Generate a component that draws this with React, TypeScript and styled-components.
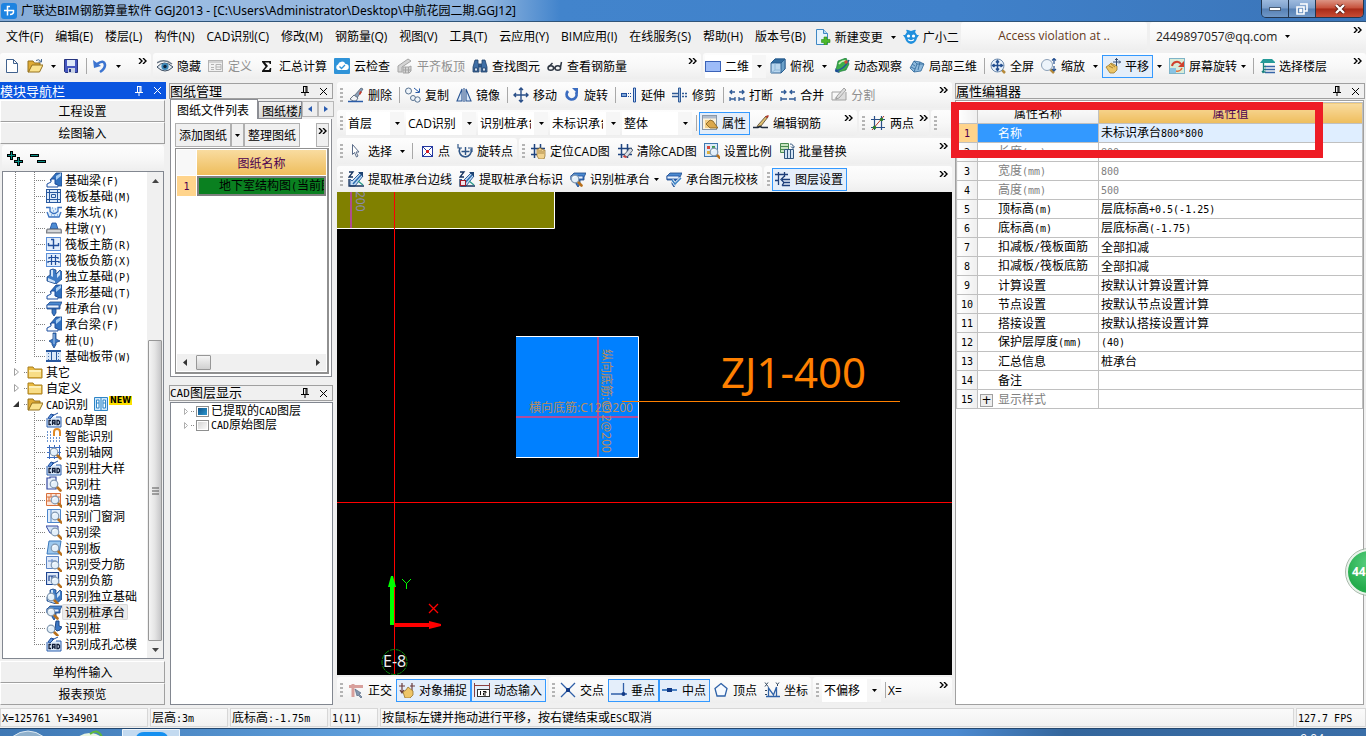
import React from 'react';
import styled, { createGlobalStyle, css } from 'styled-components';

const ui = `'Open Sans', 'Noto Sans CJK SC', sans-serif`;

const GlobalStyle = createGlobalStyle`
  * { box-sizing: border-box; }
  html, body { margin: 0; height: 100%; overflow: hidden; }
  body { background: #f0f0f0; color: #000; font: 12px/16px ${ui}; }
  button, select, input { font: inherit; color: inherit; margin: 0; }
  button { padding: 0; border: 0; background: none; white-space: nowrap; }
`;

/* ---------- icons ---------- */

const Svg = styled.svg`
  flex: none;
  display: block;
`;

const navy = '#1f4e9c';

const Lens = ({ x = 9, y = 8 }: { x?: number; y?: number }) => (
  <g>
    <path d={`M${x + 3} ${y + 3}l3.5 3.5`} stroke="#b8701c" strokeWidth="2.6" strokeLinecap="round" />
    <circle cx={x} cy={y} r="3.8" fill="#e4f0fa" stroke="#8298b0" strokeWidth="1.2" />
    <path d={`M${x - 2} ${y - 1}q1-1.6 2.6-1.2`} stroke="#fff" fill="none" />
  </g>
);

const CadTag = () => (
  <g>
    <path d="M1 6V15H15V5H10" fill="#dbe9fa" stroke="#2b5fae" />
    <path d="M2 6l3-4 3 1-4 4z M6 4l6-3" fill="#5f95de" stroke="#1f4e9c" />
    <path d="M5 8.5H3v4h2M6.5 13V8.500h2.500V13M6.500 11H9M11 8.500h1.500l1 1v2l-1 1H11z" fill="none" stroke="#101c38" strokeWidth="1.3" />
  </g>
);

const BeamShape = () => (
  <g>
    <path d="M4 8L10 1l6 0v13h-3z" fill="#2f6fbe" stroke="#1a4688" strokeWidth=".8" />
    <path d="M10 4l5-3v3l-5 4z" fill="#a8cdf2" />
    <path d="M5 7h4v5l3 1v2H1v-3l4-2z" fill="#f6faff" stroke="#1d4f9f" />
  </g>
);

const CapShape = () => (
  <g>
    <path d="M1 5l3-3h12l-2 4v3H1z" fill="#4c8ad0" stroke="#1a4688" strokeWidth=".8" />
    <rect x="1" y="5" width="12" height="3" fill="#e8f2fd" stroke="#1d4f9f" strokeWidth=".8" />
    <path d="M6 9h4v4l-2 3-2-3z" fill="#3a78c4" stroke="#1a4688" strokeWidth=".8" />
  </g>
);

const PadShape = () => (
  <g>
    <path d="M1 9l3-2V2l3-1 3 1v4l4-4 2 2v7l-6 5-9-3z" fill="#3f7cc6" stroke="#1a4688" strokeWidth=".8" />
    <path d="M5 2v6l2 1V2M11 6l3-3v4l-3 3zM2 10l7 3v2l-7-2z" fill="#cfe3f8" />
  </g>
);

const FolderShape = () => (
  <g>
    <path d="M1 3h5l1.500 2H15v9H1z" fill="#e9b93f" stroke="#a87f1e" />
    <path d="M2 6h12v7H2z" fill="#f8dd86" />
    <path d="M2 6h12v2H2z" fill="#fdf0b8" />
  </g>
);

const FolderOpen = () => (
  <g>
    <path d="M1 3h5l1.500 2H13v3H5l-3 6H1z" fill="#e0ac36" stroke="#94701c" />
    <path d="M5 7h11l-3.500 7H1.500z" fill="#fbe38e" stroke="#94701c" />
  </g>
);

const Extract = ({ dot }: { dot?: boolean }) => (
  <g>
    <path d="M2 8v7h5L15 5l-3-3L4 10z" fill="#c4dcf4" stroke="#2c5f9e" />
    <path d="M1 1h4L1 6h4M1 8v7h15" fill="none" stroke="#16335f" strokeWidth="1.300" />
    <path d="M5 13L13 4" stroke="#2c6cb0" strokeWidth="1.500" />
    <path d="M10 1h5v5z" fill="#1d4373" />
    <path d="M10 10l5 4" stroke="#2c9a8a" strokeWidth="1.400" />
    {dot && <rect x="1.500" y="9.500" width="5" height="5" fill="#f2e4ea" stroke="#9c1c2c" />}
  </g>
);

const SquareRebar = ({ neg }: { neg?: boolean }) => (
  <g fill="none" stroke={navy}>
    <rect x=".5" y="1.500" width="14" height="13" fill="#e2eefc" stroke="#5c8fd8" />
    {neg ? (
      <path d="M5.500 3v10M9.500 3v10M3 5.500h9M2 9.500h11M3 5v2M12 5v2M2 9v2M13 9v2" strokeWidth="1.200" />
    ) : (
      <path d="M7.500 3v10M5 3.500h3M2 9.500h11M2.500 7v3M12.500 7v3" strokeWidth="1.400" />
    )}
  </g>
);

const GridShape = () => <path d="M4.500 1v14M10.500 1v14M1 5.500h14M1 11.500h14" stroke="#1f4480" strokeWidth="1.500" fill="none" />;

const Cube = () => (
  <g stroke="#245a8c" strokeWidth=".9">
    <path d="M1 5l4-4h10v10l-4 4H1z" fill="#b9d6ee" />
    <path d="M1 5l4-4h10l-4 4z" fill="#326c9f" />
    <path d="M11 5l4-4v10l-4 4z" fill="#6ba0c8" />
    <path d="M5 5v7h6M5 12l-4 3" fill="none" stroke="#8ab4d4" />
  </g>
);

const icons: Record<string, React.ReactNode> = {
  page: <path d="M2.500 1.500h7l4 4v9h-11zM9.500 1.500v4h4" fill="#fff" stroke="#41628e" />,
  openFile: (
    <g>
      <FolderOpen />
      <path d="M9 2.500q3-2 5 1M14.500 1v3h-3" fill="none" stroke="#4a6c94" />
    </g>
  ),
  save: (
    <g>
      <path d="M1.500 1.500h13v13h-12l-1-1z" fill="#4557c0" stroke="#26347e" />
      <path d="M4 2h8v6H4z" fill="#dfe9f8" />
      <path d="M5 10h7v5H5z" fill="#c9d2e4" />
      <path d="M6 11h2v3H6z" fill="#26347e" />
    </g>
  ),
  undo: (
    <g>
      <path d="M5 6q7-5 8 1 0 4-5 7" fill="none" stroke="#3c74d0" strokeWidth="2.600" />
      <path d="M1 2l1 8 7-2z" fill="#3c74d0" />
    </g>
  ),
  eye: (
    <g>
      <path d="M0 5q7-5 15 1" stroke="#6a7684" strokeWidth="1.500" fill="none" />
      <path d="M0 9q7-8 16 0-8 8-16 0z" fill="#dfe9f1" stroke="#3b4c60" />
      <circle cx="8" cy="8.500" r="3.600" fill="#3a87b8" />
      <circle cx="8" cy="8.500" r="1.700" fill="#10253c" />
    </g>
  ),
  define: (
    <g fill="none" stroke="#b3b3b3">
      <rect x=".5" y="2.500" width="14" height="11" fill="#f1f1f1" />
      <path d="M1 4h13M3 6.500h3M3 9.500h3M3 11.500h3M8 6.500h5v5H8zM8 9h5" />
    </g>
  ),
  sigma: <path d="M3 3h9v3h-1.200l-.8-1.500H6L9 8l-3.500 4H10l1-2h1.200L12 14H3v-1.200L6.500 8.500 3 4z" fill="#111" />,
  cloud: (
    <g>
      <rect width="16" height="16" rx="1" fill="#2f93d8" />
      <path d="M4 12a3 3 0 0 1 0-5.500 4 4 0 0 1 7.500-.5A3 3 0 0 1 12 12z" fill="#fff" />
      <path d="M5.500 8.500l2 2 3.500-3.500" stroke="#2f93d8" strokeWidth="1.300" fill="none" />
    </g>
  ),
  flush: (
    <g stroke="#a4a4a4" fill="#d4d4d4">
      <path d="M1 8L11 1l3 2-9 6v5H1z" />
      <path d="M6 9h6l2-1v5l-2 2H6z" />
      <path d="M8.500 9v6M11.500 9v6M6 12h8" fill="none" />
    </g>
  ),
  binoculars: (
    <g fill="#3f6fa6" stroke="#1f3f68" strokeWidth=".8">
      <path d="M3 2h3v3l1 2v7H1V9zM10 2h3l2 7v5H9V7l1-2z" />
      <path d="M7 6h2v3H7z" />
      <path d="M2.500 10h3v3h-3zM10.500 10h3v3h-3z" fill="#cfe0f3" />
    </g>
  ),
  glasses: (
    <g fill="none" stroke="#2d3642" strokeWidth="1.500">
      <ellipse cx="3.800" cy="10" rx="2.800" ry="2.300" />
      <ellipse cx="10.800" cy="10" rx="2.800" ry="2.300" />
      <path d="M6.500 10h1.500M1.500 9l4-4M13.500 9l1-5" />
    </g>
  ),
  flat2d: <rect x=".5" y="3.500" width="15" height="10" fill="#9dbcf8" stroke="#3a62b8" />,
  cube: <Cube />,
  orbit: (
    <g>
      <path d="M2 12L4 3l8-3 3 6-3 6-8 2z" fill="#3fae49" stroke="#157a3a" strokeWidth=".7" />
      <path d="M1 13Q10 12 15 2" fill="none" stroke="#245a9a" strokeWidth="1.600" />
      <path d="M5 6q3-4 7-3" fill="none" stroke="#c8f2b8" strokeWidth="1.500" />
      <path d="M1 10l1 4 4 1z" fill="#1c4c92" />
      <circle cx="12" cy="4" r="1.700" fill="#d84c34" />
    </g>
  ),
  part3d: (
    <g fill="#8db9dc" stroke="#2d6698" strokeWidth=".8">
      <path d="M5 3l6 1 4 2-3 7-7 1-4-4z" />
      <path d="M5 3l3 3 7 0M8 6l-3 8M3 6l3 2M11 4l-2 8M2 9l4 2" fill="none" />
    </g>
  ),
  full: (
    <g>
      <path d="M11 11l4 4" stroke="#b58a3a" strokeWidth="2.500" />
      <circle cx="7.500" cy="7.500" r="6.500" fill="#e9f2fb" stroke="#6f8cae" />
      <path d="M7.500 3v9M3 7.500h9M6 4.500l1.500-2 1.500 2M6 10.500l1.500 2 1.500-2M4.500 6l-2 1.500 2 1.500M10.500 6l2 1.500-2 1.500" stroke="#244f90" fill="none" strokeWidth="1.500" />
    </g>
  ),
  zoom: (
    <g>
      <path d="M9 11l4 4" stroke="#b58a3a" strokeWidth="2.500" />
      <circle cx="6" cy="7" r="5.500" fill="#edf4fb" stroke="#8ba0b8" />
      <path d="M13 0v6M11 2.500L13 .5l2 2M13 8v5M11 11l2 2 2-2" stroke="#244f90" fill="none" strokeWidth="1.200" />
    </g>
  ),
  pan: (
    <g>
      <path d="M1 9l3-2 2-2 6 3v4l-3 3H5z" fill="#ecc567" stroke="#9c7a2c" strokeWidth=".8" />
      <path d="M4 8l4 2M6 6l4 3" stroke="#a9822e" />
      <path d="M11.500 0v8M8 4h7.500M10 2l1.500-1.500L13 2M14 2.500L15.500 4 14 5.500" stroke="#324b70" fill="none" />
    </g>
  ),
  screenRotate: (
    <g>
      <rect x=".5" y=".5" width="15" height="15" fill="#d8ecd8" stroke="#7fb4c8" />
      <path d="M1 10h6v5H1z" fill="#88c3e4" />
      <path d="M3 8a5 5 0 0 1 9-2" stroke="#d0402c" strokeWidth="2" fill="none" />
      <path d="M15 3v6H9z" fill="#d0402c" />
      <path d="M13 10a5 5 0 0 1-6 3" stroke="#e0703c" strokeWidth="1.500" fill="none" />
    </g>
  ),
  floors: (
    <g>
      <path d="M4 1h9l3 3v1H1z" fill="#259a98" />
      <path d="M6 8.500h10M6 11.500h10M6 14.500h10" stroke="#3565a8" strokeWidth="1.500" />
      <path d="M4.500 5v9h2M3 13l1.500 2M4 8.500h3M4 11.500h3" stroke="#19807e" fill="none" strokeWidth="1.300" />
    </g>
  ),
  newChange: (
    <g>
      <path d="M1.500.5h7l4 4v11h-11z" fill="#e6f3fd" stroke="#3f88c4" />
      <path d="M8.500.5v4h4" fill="#b7d9f2" stroke="#3f88c4" />
      <path d="M9 8h3v2.500h3v3h-3V16H9v-2.500H6.500v-3H9z" fill="#4cb82c" stroke="#2c8a18" strokeWidth=".6" />
    </g>
  ),
  mascot: (
    <g>
      <path d="M4 3Q2 0 5 1l3 1 3-1q3-1 1 2l2 3h2l-2 3q-1 5-6 6-5-1-6-6L0 6h2z" fill="#1f8fdd" />
      <circle cx="5.500" cy="7" r="1.600" fill="#fff" />
      <circle cx="10.500" cy="7" r="1.600" fill="#fff" />
      <path d="M5 10.500q3 2.500 6 0" stroke="#fff" fill="none" strokeWidth="1.200" />
    </g>
  ),
  brush: (
    <g>
      <path d="M6 9l7-8 2 1-6 9z" fill="#8aa0b8" stroke="#46566a" strokeWidth=".7" />
      <path d="M2 12l4-4 4 3-2 3H5z" fill="#f1f3f6" stroke="#46566a" strokeWidth=".8" />
      <path d="M12 4l2 1-2 3-1-1z" fill="#c43a2c" />
      <path d="M0 14.500h15" stroke="#2a5ca8" strokeWidth="1.500" />
    </g>
  ),
  copy: (
    <g fill="#eef4fa" stroke="#56708e">
      <circle cx="3.500" cy="4" r="3" />
      <circle cx="8" cy="11" r="2.500" />
      <circle cx="12.500" cy="12.500" r="2.700" />
      <path d="M9 1l5 4M14.500 1.500v4h-4" fill="none" stroke="#2a5ca8" />
    </g>
  ),
  mirror: <path d="M6 2v12H1zM10 2v12h5zM8 1v14" fill="#dbe9f8" stroke="#2a5592" strokeWidth="1.100" />,
  move: <path d="M8 1v14M1 8h14M6 3l2-2 2 2M6 13l2 2 2-2M3 6L1 8l2 2M13 6l2 2-2 2" fill="none" stroke="#2a4f88" strokeWidth="1.400" />,
  rotate: (
    <g>
      <path d="M4 4a5 5 0 1 0 8 1" fill="none" stroke="#3a6cc0" strokeWidth="2.800" />
      <path d="M8 1h6v6z" fill="#3a6cc0" />
    </g>
  ),
  extend: (
    <g stroke={navy} fill="none">
      <rect x=".5" y="6.500" width="5" height="3" fill="#7fa6d8" />
      <path d="M7 6.500h4M7 9.500h4" strokeDasharray="1 1" />
      <path d="M12.500 1v14h2V1z" fill="#c4d8f0" />
    </g>
  ),
  trim: (
    <g stroke="#2f5a96" fill="none">
      <path d="M0 6.500h6M0 9.500h6" strokeWidth="1.300" />
      <path d="M6.500 1v14h2V1z" fill="#9fbce0" />
      <path d="M10 6.500h6M10 9.500h6" strokeDasharray="2 1" strokeWidth="1.300" />
    </g>
  ),
  breakLine: <path d="M1 12h5M10 12h5M1 10v4M6 10v4M10 10v4M15 10v4M1 5h5M3 3L1 5l2 2M10 5h5M13 3l2 2-2 2" fill="none" stroke="#2f5a96" strokeWidth="1.300" />,
  merge: <path d="M1 12h6M9 12h6M1 10v4M15 10v4M1 5h5M4 3l2 2-2 2M15 5h-5M12 3l-2 2 2 2" fill="none" stroke="#2f5a96" strokeWidth="1.300" />,
  split: <path d="M1 5h9M1 13h14V5M1 5v8M5 13v-3M13 1L6 9l-1 3 3-1 7-8z" fill="#ddd" stroke="#a2a2a2" />,
  property: (
    <g>
      <rect x=".5" y=".5" width="14" height="14" fill="#fbf2dc" stroke="#8a98a8" />
      <path d="M1 1h13v2.500H1z" fill="#b0bccc" />
      <path d="M3 5h4v8H3z" fill="#f3cf86" />
      <path d="M4 9l4-4 3 1 2 3 3 4H8z" fill="#dba84c" stroke="#7c5a20" strokeWidth=".8" />
    </g>
  ),
  pencil: (
    <g>
      <path d="M5 10L13 1l2 1-7 9-4 1z" fill="#e0c070" stroke="#4c4030" strokeWidth=".8" />
      <path d="M12 2l2 1 2-2-1-1z" fill="#b4372a" />
      <path d="M0 12.500h5l2-1 2 1h6" stroke="#1f2b3c" strokeWidth="1.600" fill="none" />
    </g>
  ),
  twoPoint: (
    <g>
      <path d="M4.500 1v14M11.500 1v14M1 4.500h14M1 12.500h14" stroke="#2a4f88" fill="none" strokeWidth="1.200" />
      <path d="M2 15L14 1" stroke="#b43828" />
      <circle cx="4.500" cy="12.500" r="1.800" fill="#2f7c2c" />
      <circle cx="11.500" cy="4.500" r="1.800" fill="#2f7c2c" />
    </g>
  ),
  cursor: <path d="M4.500 1.500v10l2-2 2 4.500 1.500-1-2-4h3z" fill="#fff" stroke="#5a6c88" />,
  point: (
    <g>
      <rect x="4.500" y="3.500" width="10" height="10" fill="#fff" stroke="#2438a0" />
      <path d="M5 4l9 9M14 4l-9 9" stroke="#2438a0" />
      <path d="M8 8.500h3M9.500 7v3" stroke="#e02020" strokeWidth="2" />
    </g>
  ),
  rotatePoint: (
    <g fill="none" stroke="#2f5688">
      <path d="M3 5a6 6 0 1 0 11 1" strokeWidth="1.600" />
      <path d="M11 5h4v4M1 1v4h4" strokeWidth="1.200" />
      <path d="M8.500 4v8M4.500 8.500h8" strokeWidth="1.400" />
    </g>
  ),
  locate: (
    <g>
      <GridShape />
      <path d="M7 8V6h2v-1h2v1h2v1h2v6l-1 3H9l-2-3z" fill="#f1d390" stroke="#8c6c2c" strokeWidth=".7" />
      <path d="M9 7v4M11 7v4M13 8v3" stroke="#8c6c2c" strokeWidth=".7" />
    </g>
  ),
  clearCad: (
    <g>
      <GridShape />
      <path d="M7 12l6-7 3 2-6 7z" fill="#d9dfe7" stroke="#3c4a5c" strokeWidth=".8" />
      <path d="M7 12l3 2-1 1-3-1z" fill="#c83c3c" />
    </g>
  ),
  scale: (
    <g>
      <rect x=".5" y=".5" width="13" height="13" fill="#dcebf8" stroke="#3f78b0" />
      <path d="M3 3h3v3H3z" fill="#d8483c" />
      <path d="M8 3h3v3H8z" fill="#3c9a4c" />
      <path d="M3 8h3v3H3z" fill="#e0b03c" />
      <Lens x={10} y={9} />
    </g>
  ),
  batch: (
    <g>
      <path d="M1.500.5h8v9h-8zM2 3.500h7M2 6.500h7" fill="#c8e4c0" stroke="#4a8a50" />
      <path d="M5.500 6.500h9v9h-9zM8.500 7v8M11.500 7v8" fill="#d4e4f4" stroke="#31557e" />
      <path d="M11 1q4 0 3 4M12 3.500L14 5.500l1.500-2" fill="none" stroke="#31557e" />
    </g>
  ),
  extractEdge: <Extract />,
  extractMark: <Extract dot />,
  identifyCap: (
    <g>
      <CapShape />
      <Lens x={5} y={8} />
    </g>
  ),
  checkCap: (
    <g>
      <CapShape />
      <path d="M6 9l3 4 6-6" fill="none" stroke="#fff" strokeWidth="3" />
      <path d="M6 9l3 4 6-6" fill="none" stroke="#3b82c4" strokeWidth="1.600" />
    </g>
  ),
  layers: (
    <g fill="none" stroke="#1d3f7a" strokeWidth="1.300">
      <path d="M3.500 1v13M0 3.500h13M9.500 1v5M0 9.500h4" />
      <path d="M7 8.500h8M8 11.500h7M7 14.500h8M9 5.500L6 8.500l3 3-2 3" />
    </g>
  ),
  ortho: (
    <g>
      <path d="M5 2v13M1 4.500h14" stroke="#d8a09c" strokeWidth="3" />
      <path d="M7 7l6 4-2 1 3 3-1 1-3-3-1 1z" fill="#8497ae" stroke="#4c5e78" strokeWidth=".6" />
    </g>
  ),
  snap: (
    <g>
      <path d="M3 1v10M13 1v9M0 4h6M1 8l2 3 2-3M11 4h5" fill="none" stroke="#6c3c3c" strokeWidth="1.200" />
      <path d="M4 10l3-2 2-3 5 4v4l-3 3H6z" fill="#eec567" stroke="#94722c" strokeWidth=".8" />
    </g>
  ),
  dynamic: (
    <g>
      <path d="M.5 1v14M15.500 1v7M1 3.500h14" stroke="#8c4040" fill="none" />
      <rect x="3.500" y="7.500" width="12" height="7" fill="#fff" stroke="#333" />
      <path d="M6.500 9v4M9 9.500h3v1.500H9.500v2H12" fill="none" stroke="#111" />
    </g>
  ),
  cross: (
    <g>
      <path d="M1 1l14 14M15 1L1 15" stroke="#2f5fa8" strokeWidth="1.300" />
      <rect x="6" y="6" width="4" height="4" fill="#123a86" />
    </g>
  ),
  perp: (
    <g>
      <path d="M12.500 1v11M0 12h16" stroke="#2f5fa8" strokeWidth="1.300" />
      <circle cx="12.500" cy="12" r="2" fill="#123a86" />
    </g>
  ),
  middle: (
    <g>
      <path d="M0 8h15" stroke="#4a82c4" strokeWidth="2" />
      <rect x="5" y="6" width="5" height="4" fill="#123a86" />
    </g>
  ),
  vertex: <path d="M8 1.500l6 5L12 14H4L2 6.500z" fill="#f6faff" stroke="#2f62a8" strokeWidth="1.300" />,
  coord: (
    <g fill="none" stroke="#2f62a8">
      <path d="M4.500 15V6l5 7 3-8v10M2 14.500h14" strokeWidth="1.300" />
      <path d="M1 .5l3 4M4 .5l-3 4M12 .5l1.500 2L15 .5M13.500 2v2M1 8.500h2M1 12.500h2" stroke="#35485f" />
    </g>
  ),
  foundationBeam: <BeamShape />,
  raft: (
    <g fill="none" stroke="#28589e">
      <rect x=".5" y="1.500" width="14" height="13" fill="#dceafa" />
      <path d="M3.500 1v14M11.500 1v14M0 4.500h15M0 11.500h15M5.500 6.500h4v3h-4z" />
    </g>
  ),
  sump: (
    <g>
      <path d="M0 3.500h4v4l3 2h2l3-2v-4h4M1 8l2 5h10l2-5" fill="#dfeefb" stroke="#3a72c0" strokeWidth="1.300" />
      <path d="M6 4h1M9 5h1M5 11h1M8 12h1M11 11h1M7 7h1" fill="none" stroke="#4c88d4" strokeWidth="1.200" />
    </g>
  ),
  pier: (
    <g>
      <path d="M6 3h4l2 6H4z" fill="#4d8bd2" stroke="#1d4f9f" strokeWidth=".8" />
      <path d="M1 9h14l1 4H0z" fill="#b4b8be" stroke="#5c6068" strokeWidth=".8" />
      <path d="M2 11h12" stroke="#f4f4f4" />
    </g>
  ),
  raftMain: <SquareRebar />,
  raftNeg: <SquareRebar neg />,
  pad: <PadShape />,
  strip: <BeamShape />,
  cap: <CapShape />,
  capBeam: <BeamShape />,
  pile: (
    <g fill="#3c78c4" stroke="#1a4688" strokeWidth=".8">
      <path d="M7 1h3v6l4 2-4 1.500v2L8 16l-2-3.500V11L3 9l4-2z" />
      <path d="M8 2v10" stroke="#cfe3f8" />
    </g>
  ),
  band: (
    <g>
      <rect y="2" width="15" height="12" fill="#dbe8f8" />
      <path d="M0 3h15M0 13h15" stroke="#28589e" strokeWidth="2" />
      <path d="M5.500 4v8M10.500 4v8" stroke="#28589e" fill="none" />
      <path d="M2.500 5v7M12.500 5v7" stroke="#4a78b4" strokeDasharray="1 2" />
    </g>
  ),
  folder: <FolderShape />,
  folderOpen: <FolderOpen />,
  cad: <CadTag />,
  smart: (
    <g>
      <path d="M1 4h5M1 7h5M1 10h14M1 13h14" stroke="#3a72c0" strokeDasharray="1 2" strokeWidth="1.300" />
      <path d="M8 8V4a3 3 0 0 1 6 0v4" fill="none" stroke="#e08a24" strokeWidth="2" />
    </g>
  ),
  axis: (
    <g>
      <path d="M3.500 1v14M8.500 1v14M13.500 1v14M1 3.500h14M1 8.500h14M1 13.500h14" stroke="#3a6cc0" />
      <Lens x={8} y={8} />
    </g>
  ),
  column: (
    <g>
      <path d="M1 2h3V1h6v12H1z" fill="#eaf2fd" stroke="#3448a0" strokeWidth="1.200" />
      <Lens x={8} y={8} />
    </g>
  ),
  wall: (
    <g>
      <path d="M.5 1.500h14v12H.5zM1 5h13M1 9h13M5 2v3M10 2v3M3 5v4M12 5v4" fill="#fce6da" stroke="#d8703c" />
      <Lens x={9} y={8} />
    </g>
  ),
  opening: (
    <g>
      <path d="M1.500 1.500h13v13h-13zM5 2v12" fill="#e2eefb" stroke="#4c86cc" />
      <Lens x={9} y={8} />
    </g>
  ),
  beam: (
    <g>
      <path d="M0 2h12v4L8 9H4z" fill="#d4e5f8" stroke="#3448a0" />
      <Lens x={9} y={8} />
    </g>
  ),
  slab: (
    <g>
      <path d="M3 1h12l-2 13H1z" fill="#9cc8ee" stroke="#3a78bc" />
      <Lens x={9} y={8} />
    </g>
  ),
  forceBar: (
    <g>
      <path d="M.5.5h12v12H.5zM6 3v6M2 5h8" fill="#dfeafa" stroke="#5c84c4" />
      <Lens x={9} y={9} />
    </g>
  ),
  negBar: (
    <g>
      <path d="M.5.5h12v12H.5zM3 9V4h7M6 4v7" fill="#dfeafa" stroke="#1d4490" strokeWidth="1.200" />
      <Lens x={9} y={9} />
    </g>
  ),
  identifyPad: (
    <g>
      <PadShape />
      <Lens x={5} y={9} />
    </g>
  ),
  identifyPile: (
    <g>
      <path d="M10 1h3v5l3 1-2 3-3 1-2-2z" fill="#3c78c4" stroke="#1a4688" />
      <Lens x={5} y={9} />
    </g>
  ),
};

const Icon = ({ name }: { name: string }) => (
  <Svg width="16" height="16" viewBox="0 0 16 16" fill="none" aria-hidden="true">
    {icons[name]}
  </Svg>
);

const Caret = () => (
  <Svg width="5" height="3" viewBox="0 0 5 3" aria-hidden="true">
    <path d="M0 0h5L2.500 3z" fill="#000" />
  </Svg>
);

const Chevrons = () => (
  <Svg width="9" height="6" viewBox="0 0 9 6" aria-hidden="true">
    <path d="M1 0l3 3-3 3M5 0l3 3-3 3" fill="none" stroke="#000" strokeWidth="1.400" />
  </Svg>
);

const PinIcon = () => (
  <Svg width="8" height="10" viewBox="0 0 8 10" aria-hidden="true">
    <path d="M2 .5h4M2.500 0v6M5 0v6M6 0v6M0 6.500h8M4 7v3" fill="none" stroke="currentColor" />
  </Svg>
);

const CloseIcon = () => (
  <Svg width="9" height="9" viewBox="0 0 9 9" aria-hidden="true">
    <path d="M1 1l7 7M8 1L1 8" stroke="currentColor" />
  </Svg>
);

/* Dialog-font text: full-width Chinese glyphs with half-width Latin ones. */
const HalfWidth = styled.span<{ $size: number }>`
  font-family: 'DejaVu Sans Mono', monospace;
  font-size: ${(p) => p.$size}px;
  white-space: pre;
`;

const Dialog = ({ text, size = 10 }: { text: string; size?: number }) => (
  <>
    {text
      .split(/([\x20-\x7e]+)/)
      .filter(Boolean)
      .map((part, i) => (/^[\x20-\x7e]/.test(part) ? <HalfWidth key={i} $size={size}>{part}</HalfWidth> : part))}
  </>
);

/* ---------- window frame ---------- */

const Window = styled.div`
  display: flex;
  flex-direction: column;
  min-height: 100vh;
  position: relative;
  overflow: hidden;
`;

const TitleBar = styled.header`
  display: flex;
  align-items: center;
  height: 22px;
  padding-left: 1px;
  gap: 4px;
  border-bottom: 1px solid #2f5479;
  background: linear-gradient(90deg, #82a9d6 0, #9dbde2 140px, #8db3de 490px, #4284cc 560px, #4081ca 70%, #3a74b8);
`;

const AppTitle = styled.h1`
  flex: 1;
  margin: 0;
  font: 12px/20px 'Noto Sans', 'Noto Sans CJK SC', sans-serif;
`;

const Caption = styled.div`
  display: flex;
  align-self: flex-start;
  margin-right: 2px;
  border: 1px solid #23364f;
  border-top: 0;
  border-radius: 0 0 5px 5px;
  overflow: hidden;
`;

const CaptionButton = styled.button<{ $danger?: boolean }>`
  display: grid;
  place-items: center;
  width: ${(p) => (p.$danger ? 47 : 27)}px;
  height: 17px;
  border-right: ${(p) => (p.$danger ? 0 : '1px solid #23364f')};
  background: ${(p) =>
    p.$danger ? 'linear-gradient(#dc9484, #c6503a 48%, #a82a18 52%, #c84c34)' : 'linear-gradient(#9dbade, #7c9fcb 48%, #5680b4 52%, #7097c6)'};
`;

const MenuBar = styled.nav`
  display: flex;
  height: 30px;
  margin-bottom: 1px;
  gap: 3px;
`;

const MenuList = styled.div`
  display: flex;
  align-items: center;
  width: 958px;
`;

const MenuItem = styled.button`
  padding: 0 6px;
  height: 24px;
`;

const panelFill = css`
  border-radius: 3px;
  background: linear-gradient(#fdfdfd, #f8f8f8 50%, #eeeeee);
`;

const MenuPanel = styled.div<{ $grow?: boolean }>`
  ${panelFill}
  display: flex;
  align-items: center;
  width: ${(p) => (p.$grow ? 'auto' : '186px')};
  flex: ${(p) => (p.$grow ? 1 : 'none')};
  justify-content: ${(p) => (p.$grow ? 'flex-start' : 'center')};
  padding-left: ${(p) => (p.$grow ? 3 : 0)}px;
  margin-bottom: 2px;
  color: ${(p) => (p.$grow ? '#222' : '#66391a')};
`;

/* ---------- tool bars ---------- */

const ToolRow = styled.div`
  display: flex;
  gap: 2px;
`;

const ToolGroup = styled.div<{ $width?: number }>`
  ${panelFill}
  display: flex;
  align-items: center;
  height: 26px;
  padding-left: 1px;
  ${(p) => (p.$width ? `width: ${p.$width}px;` : 'flex: 1;')}
`;

const ToolButton = styled.button<{ $on?: boolean }>`
  display: flex;
  align-items: center;
  gap: 4px;
  flex: none;
  height: 23px;
  padding: 0 3px 0 2px;
  border: 1px solid ${(p) => (p.$on ? '#3399ff' : 'transparent')};
  background: ${(p) => (p.$on ? '#e4eefa' : 'none')};
  &:disabled { color: #8f8f8f; }
`;

const ToolLabel = styled.span`
  padding-top: 2px;
`;

const CaretButton = styled.button`
  display: grid;
  place-items: center;
  flex: none;
  width: 13px;
  height: 23px;
`;

const MoreButton = styled.button`
  align-self: flex-start;
  margin: 4px 3px 0 auto;
  padding: 1px;
`;

const Grip = styled.span`
  flex: none;
  width: 3px;
  height: 14px;
  margin: 0 2px;
  background: repeating-linear-gradient(#b4b4b4 0 2px, transparent 2px 4px);
`;

const Separator = styled.span`
  flex: none;
  width: 1px;
  height: 16px;
  margin: 0 2px 0 3px;
  background: #a8a8a8;
`;

const ComboBox = styled.span<{ $width: number }>`
  position: relative;
  display: flex;
  align-items: center;
  flex: none;
  gap: 2px;
  width: ${(p) => p.$width}px;
  height: 23px;
  margin: 0 1px;
  background: #fff;
`;

const ComboSelect = styled.select`
  appearance: none;
  width: 100%;
  min-width: 0;
  height: 100%;
  padding: 2px 17px 0 2px;
  border: 0;
  border-radius: 0;
  background: none;
  overflow: hidden;
`;

const ComboArrow = styled.span`
  position: absolute;
  right: 0;
  top: 0;
  display: grid;
  place-items: center;
  width: 14px;
  height: 100%;
  background: #f6f6f6;
  pointer-events: none;
`;

const Tool = ({ icon, label, on, drop, off }: { icon: string; label?: string; on?: boolean; drop?: boolean; off?: boolean }) => (
  <ToolButton $on={on} disabled={off} aria-pressed={on} aria-label={label ?? icon}>
    <Icon name={icon} />
    {label && <ToolLabel>{label}</ToolLabel>}
    {drop && <Caret />}
  </ToolButton>
);

const Drop = () => (
  <CaretButton aria-label="展开">
    <Caret />
  </CaretButton>
);

const More = () => (
  <MoreButton aria-label="更多">
    <Chevrons />
  </MoreButton>
);

const Combo = ({ label, value, width, icon }: { label: string; value: string; width: number; icon?: string }) => (
  <ComboBox $width={width}>
    {icon && <Icon name={icon} />}
    <ComboSelect aria-label={label} defaultValue={value}>
      <option>{value}</option>
    </ComboSelect>
    <ComboArrow>
      <Caret />
    </ComboArrow>
  </ComboBox>
);

/* ---------- docked panels ---------- */

const Workspace = styled.main`
  flex: 1;
  display: grid;
  grid-template-columns: 166px 165px minmax(0, 1fr) 411px;
  gap: 3px;
  padding: 3px 0 2px;
  min-height: 0;
`;

const Column = styled.section`
  display: flex;
  flex-direction: column;
  min-width: 0;
  position: relative;
`;

const PanelTitle = styled.header<{ $active?: boolean }>`
  display: flex;
  align-items: center;
  gap: 10px;
  height: ${(p) => (p.$active ? 17 : 16)}px;
  flex: none;
  padding-right: 4px;
  margin: ${(p) => (p.$active ? '0 0 1px' : '1px 1px 0 0')};
  border: ${(p) => (p.$active ? '0' : '1px solid #a0a0a0')};
  background: ${(p) => (p.$active ? '#0a55e0' : '#f0f0f0')};
  color: ${(p) => (p.$active ? '#fff' : '#000')};
`;

const PanelName = styled.h2`
  flex: 1;
  margin: 0;
  font: 13px/14px 'Noto Sans CJK SC', sans-serif;
  white-space: nowrap;
`;

const Panel = ({ title, active }: { title: string; active?: boolean }) => (
  <PanelTitle $active={active}>
    <PanelName>
      <Dialog text={title} size={11} />
    </PanelName>
    <button aria-label="固定"><PinIcon /></button>
    <button aria-label="关闭"><CloseIcon /></button>
  </PanelTitle>
);

const NavButton = styled.button`
  flex: none;
  height: 22px;
  border: 1px solid #a0a0a0;
  border-color: #fff #a0a0a0 #a0a0a0 #fff;
  background: #f0f0f0;
  font-family: 'Noto Sans CJK SC', sans-serif;
  margin-right: 1px;
`;

const NavTools = styled.div`
  ${panelFill}
  display: flex;
  align-items: center;
  height: 26px;
  margin: 1px 2px 0;
  padding-left: 5px;
`;

const TreeBox = styled.div`
  display: flex;
  flex: 1;
  margin: 0 2px 2px;
  border: 1px solid #828790;
  background: #fff;
`;

const TreeList = styled.ul`
  flex: 1;
  min-width: 0;
  margin: 0;
  padding: 0;
  list-style: none;
  font-family: 'Noto Sans CJK SC', sans-serif;
`;

const TreeItem = styled.li`
  display: flex;
  align-items: center;
  height: 16px;
  white-space: nowrap;
`;

const dots = (dir: string) => `repeating-linear-gradient(${dir}, #808080 0 1px, transparent 1px 2px)`;

const Trunk = styled.span<{ $line?: boolean }>`
  flex: none;
  width: 19px;
  height: 16px;
  margin-left: 12px;
  background: ${(p) => (p.$line ? dots('180deg') : 'none')} left / 1px 100% no-repeat;
`;

const Branch = styled.span<{ $last?: boolean }>`
  flex: none;
  width: 12px;
  height: 16px;
  background: ${dots('180deg')} left top / 1px ${(p) => (p.$last ? 8 : 16)}px no-repeat, ${dots('90deg')} left center / 100% 1px no-repeat;
`;

const Twisty = styled.button`
  width: 11px;
  margin-left: 10px;
`;

const TreeLabel = styled.span<{ $current?: boolean }>`
  height: 16px;
  padding: 0 3px;
  border-radius: 2px;
  line-height: 16px;
  background: ${(p) => (p.$current ? '#ececec' : 'none')};
  box-shadow: ${(p) => (p.$current ? 'inset 0 0 0 1px #d9d9d9' : 'none')};
`;

const NewTag = styled.em`
  align-self: flex-start;
  padding: 0 1px;
  background: #ffe100;
  font: bold 8px/9px 'DejaVu Sans', sans-serif;
`;

const ScrollColumn = styled.div`
  display: flex;
  flex-direction: column;
  flex: none;
  width: 16px;
  background: #f0f0f0;
`;

const ScrollArrow = styled.button`
  display: grid;
  place-items: center;
  flex: none;
  width: 16px;
  height: 17px;
`;

const TrackBefore = styled.span`
  flex: 151;
`;

const Thumb = styled.span`
  display: grid;
  place-items: center;
  flex: 299;
  margin: 0 1px;
  border: 1px solid #979797;
  border-radius: 1px;
  background: linear-gradient(90deg, #f5f5f5, #e4e4e4 50%, #c6c6c8);
`;

const foundation: [string, string][] = [
  ['foundationBeam', '基础梁(F)'],
  ['raft', '筏板基础(M)'],
  ['sump', '集水坑(K)'],
  ['pier', '柱墩(Y)'],
  ['raftMain', '筏板主筋(R)'],
  ['raftNeg', '筏板负筋(X)'],
  ['pad', '独立基础(P)'],
  ['strip', '条形基础(T)'],
  ['cap', '桩承台(V)'],
  ['capBeam', '承台梁(F)'],
  ['pile', '桩(U)'],
  ['band', '基础板带(W)'],
];

const recognition: [string, string][] = [
  ['cad', 'CAD草图'],
  ['smart', '智能识别'],
  ['axis', '识别轴网'],
  ['cad', '识别柱大样'],
  ['column', '识别柱'],
  ['wall', '识别墙'],
  ['opening', '识别门窗洞'],
  ['beam', '识别梁'],
  ['slab', '识别板'],
  ['forceBar', '识别受力筋'],
  ['negBar', '识别负筋'],
  ['identifyPad', '识别独立基础'],
  ['identifyCap', '识别桩承台'],
  ['identifyPile', '识别桩'],
  ['cad', '识别成孔芯模'],
];

const Leaves = ({ items, line }: { items: [string, string][]; line?: boolean }) => (
  <>
    {items.map(([icon, label], i) => (
      <TreeItem key={label}>
        <Trunk $line={line} />
        <Branch $last={i === items.length - 1} />
        <Icon name={icon} />
        <TreeLabel $current={label === '识别桩承台'}>
          <Dialog text={label} />
        </TreeLabel>
      </TreeItem>
    ))}
  </>
);

const FolderRow = ({ label, open, children }: { label: string; open?: boolean; children?: React.ReactNode }) => (
  <TreeItem>
    <Twisty aria-label={label}>
      <Svg width="8" height="8" viewBox="0 0 8 8" aria-hidden="true">
        {open ? <path d="M6 1v6H0z" fill="#333" /> : <path d="M1.500.5v7l4-3.500z" fill="#fff" stroke="#a0a0a0" />}
      </Svg>
    </Twisty>
    <Svg width="3" height="1" aria-hidden="true"><path d="M0 .5h1M2 .5h1" stroke="#808080" /></Svg>
    <Icon name={open ? 'folderOpen' : 'folder'} />
    <TreeLabel>
      <Dialog text={label} />
    </TreeLabel>
    {children}
  </TreeItem>
);

/* ---------- drawing manager ---------- */

const TabRow = styled.div`
  display: flex;
  align-items: flex-end;
  height: 20px;
  margin-left: 1px;
  font-family: 'Noto Sans CJK SC', sans-serif;
  overflow: hidden;
`;

const Tab = styled.button<{ $on?: boolean }>`
  flex: ${(p) => (p.$on ? 'none' : '1')};
  min-width: 0;
  width: ${(p) => (p.$on ? '88px' : 'auto')};
  height: ${(p) => (p.$on ? 20 : 18)}px;
  padding-left: ${(p) => (p.$on ? 6 : 3)}px;
  border: 1px solid #8c8e94;
  border-bottom: ${(p) => (p.$on ? '0' : '1px solid #8c8e94')};
  background: ${(p) => (p.$on ? '#fff' : 'linear-gradient(#f2f2f2, #d6d6d6)')};
  text-align: left;
  line-height: 15px;
  overflow: hidden;
`;

const TabArrow = styled.button`
  display: grid;
  place-items: center;
  align-self: center;
  width: 16px;
  height: 16px;
  border: 1px solid #b8b8b8;
  background: #eee;
`;

const Sheet = styled.div`
  display: flex;
  flex-direction: column;
  height: 258px;
  margin: 0 2px 0 1px;
  padding: 4px 2px 2px 4px;
  border: 1px solid #8c8e94;
  border-top: 0;
  background: #fff;
  font-family: 'Noto Sans CJK SC', sans-serif;
`;

const SheetTools = styled.div`
  display: flex;
  height: 24px;
  margin-bottom: 1px;
`;

const FlatButton = styled.button<{ $push?: boolean }>`
  display: grid;
  justify-items: center;
  align-items: ${(p) => (p.$push ? 'start' : 'center')};
  padding: ${(p) => (p.$push ? '4px 1px 0' : '0 3px')};
  border: 1px solid #b0b0b0;
  background: #f0f0f0;
  margin-left: ${(p) => (p.$push ? 'auto' : '0')};
`;

const Well = styled.div`
  display: flex;
  flex-direction: column;
  flex: 1;
  border: 1px solid #909090;
  border-right-width: 2px;
  border-bottom-width: 2px;
  overflow: hidden;
`;

const Files = styled.table`
  width: 100%;
  table-layout: fixed;
  border-collapse: separate;
  border-spacing: 1px;
  thead td { background: #f8f8f8; }
  thead th { height: 25px; padding: 0; font-weight: normal; color: #4c0050; background: linear-gradient(#f9dca0, #eebd5c); }
  tbody th { width: 19px; height: 18px; padding: 0; font-weight: normal; color: #4c0050; background: #ffd48c; }
  tbody td { padding: 0 0 0 20px; border: 2px solid #808080; background: #0a8020; white-space: nowrap; overflow: hidden; line-height: 14px; }
`;

const HScroll = styled.div`
  display: flex;
  align-items: center;
  height: 17px;
  margin: auto 1px 1px;
  background: #f0f0f0;
`;

const HThumb = styled.span`
  width: 15px;
  height: 15px;
  margin: 0 auto 0 3px;
  border: 1px solid #979797;
  border-radius: 1px;
  background: linear-gradient(#f5f5f5, #d0d0d0);
`;

const LayerBox = styled.ul`
  flex: 1;
  margin: 1px 1px 0;
  padding: 1px 0 0 12px;
  border: 1px solid #828790;
  background: #fff;
  list-style: none;
  font-family: 'Noto Sans CJK SC', sans-serif;
`;

const LayerRow = styled.li`
  display: flex;
  align-items: center;
  gap: 2px;
  height: 14px;
  line-height: 14px;
`;

const LayerCheck = styled.input`
  appearance: none;
  width: 13px;
  height: 11px;
  border: 1px solid #8e8f8f;
  background: linear-gradient(135deg, #d0d0d0, #fff);
  box-shadow: inset 0 0 0 1px #fff;
  &:checked { background: linear-gradient(135deg, #0c4a80, #2fa0d8); }
`;

const LayerLabel = styled.label`
  display: flex;
  align-items: center;
  gap: 2px;
`;

/* ---------- centre ---------- */

const ToolStack = styled.div`
  display: grid;
  gap: 2px;
  flex: none;
`;

const Drawing = styled.svg`
  display: block;
  flex: 1;
  width: 100%;
  min-height: 0;
  margin-bottom: 2px;
  background: #000;
`;

/* ---------- properties ---------- */

const PropertyBox = styled.div`
  flex: 1;
  margin: 1px 2px 0 0;
  padding-top: 1px;
  border: 1px solid #a0a0a0;
  background: #fff;
`;

const PropertyTable = styled.table`
  width: 100%;
  table-layout: fixed;
  border-collapse: collapse;
  font-family: 'Noto Sans CJK SC', sans-serif;
  th, td { height: 19px; padding: 0 2px; border: 1px solid #c0c0c0; font-weight: normal; text-align: left; line-height: 16px; white-space: nowrap; overflow: hidden; }
  th:first-child { padding: 0; text-align: center; background: linear-gradient(90deg, #fff, #efefef); }
  thead th { height: 21px; text-align: center; }
  col:first-child { width: 21px; }
  col:nth-child(2) { width: 121px; }
`;

const NameHead = styled.th`
  background: linear-gradient(#fff, #ececec);
`;

const ValueHead = styled.th`
  color: #4c0050;
  background: linear-gradient(#f9dca0, #eebd5c);
`;

const PropertyRow = styled.tr<{ $state?: string }>`
  color: ${(p) => (p.$state === 'off' ? '#808080' : '#000')};
  th { color: #000; }
  td:nth-child(2) { padding-left: 20px; }
  ${(p) =>
    p.$state === 'on' &&
    css`
      && th { background: #ffd48c; color: #4c0050; }
      td { background: #dfeeff; }
      td:nth-child(2) { background: #3399ff; color: #fff; }
    `}
  ${(p) => p.$state === 'group' && 'td { color: #808080; } && td:nth-child(2) { padding-left: 2px; }'}
`;

const Expander = styled.button`
  width: 13px;
  height: 13px;
  margin-right: 5px;
  border: 1px solid #a0a0a0;
  background: #eee;
  color: #000;
  font: 12px/10px 'DejaVu Sans', sans-serif;
`;

const Highlight = styled.div`
  position: absolute;
  left: -4px;
  top: 20px;
  width: 372px;
  height: 56px;
  border: 8px solid #ee1c25;
  pointer-events: none;
`;

const properties: [string, string, string?][] = [
  ['名称', '未标识承台800*800', 'on'],
  ['长度(mm)', '800', 'off'],
  ['宽度(mm)', '800', 'off'],
  ['高度(mm)', '500', 'off'],
  ['顶标高(m)', '层底标高+0.5(-1.25)'],
  ['底标高(m)', '层底标高(-1.75)'],
  ['扣减板/筏板面筋', '全部扣减'],
  ['扣减板/筏板底筋', '全部扣减'],
  ['计算设置', '按默认计算设置计算'],
  ['节点设置', '按默认节点设置计算'],
  ['搭接设置', '按默认搭接设置计算'],
  ['保护层厚度(mm)', '(40)'],
  ['汇总信息', '桩承台'],
  ['备注', ''],
  ['显示样式', '', 'group'],
];

/* ---------- bottom ---------- */

const BottomTools = styled(ToolRow)`
  margin-bottom: 2px;
`;

const StatusBar = styled.footer`
  display: flex;
  gap: 2px;
  height: 21px;
  padding: 1px 0;
  font-family: 'Noto Sans CJK SC', sans-serif;
`;

const StatusCell = styled.span<{ $width?: number }>`
  ${(p) => (p.$width ? `width: ${p.$width}px;` : 'flex: 1;')}
  padding-left: 1px;
  border: 1px solid #d7d7d7;
  background: linear-gradient(#fafafa, #f2f2f2);
  line-height: 16px;
  white-space: nowrap;
`;

const TaskBar = styled.div`
  display: flex;
  justify-content: space-between;
  height: 8px;
  border-top: 1px solid #24476e;
  background: linear-gradient(90deg, #3f78b4, #62a3e0 30%, #4c8ad0 70%, #34669c 78%, #3a6ea8);
  overflow: hidden;
`;

const Clock = styled.time`
  margin-right: 42px;
  padding-top: 3px;
  color: #fff;
  line-height: 14px;
`;

const FloatBall = styled.button`
  position: absolute;
  right: -26px;
  top: 549px;
  width: 46px;
  height: 46px;
  padding-left: 4px;
  border: 2px solid #e8f4ea;
  border-radius: 50%;
  outline: 1px solid #a8b8aa;
  background: radial-gradient(circle at 50% 30%, #5ad080, #24ac4c 70%);
  color: #fff;
  font-weight: bold;
  text-align: left;
`;

const menus = ['文件(F)', '编辑(E)', '楼层(L)', '构件(N)', 'CAD识别(C)', '修改(M)', '钢筋量(Q)', '视图(V)', '工具(T)', '云应用(Y)', 'BIM应用(I)', '在线服务(S)', '帮助(H)', '版本号(B)'];

const CadDrawing = () => (
  <Drawing role="img" aria-label="CAD 图形区">
    <rect x="0" y="-1" width="217" height="37" fill="#808000" />
    <path d="M0 36.500H217.500V0" fill="none" stroke="#fff" />
    <path d="M14 0v36" stroke="#b04c8c" strokeWidth="2" />
    <text transform="translate(19 -1) rotate(90)" fontFamily="Noto Sans" fontSize="12" fill="#8a8ab0">200</text>
    <path d="M57.500 0V482M0 310.500H2000" stroke="#f00" />
    <rect x="179" y="144" width="122" height="122" fill="#0080ff" />
    <path d="M179 144.500H301.500V265.500H179" fill="none" stroke="#fff" />
    <path d="M179 225h122M261 145v120" stroke="#b04c9c" strokeWidth="2" />
    <g fontFamily="'Noto Sans', 'Noto Sans CJK SC', sans-serif" fontSize="12" fill="#b88c60">
      <text x="192" y="220">横向底筋:C12@200</text>
      <text transform="translate(265 157) rotate(90)">纵向底筋:C12@200</text>
    </g>
    <path d="M285 209.500H563" stroke="#ff8000" />
    <text x="384" y="196" fontFamily="Noto Sans" fontSize="42" fill="#ff8000">ZJ1-400</text>
    <path d="M55 394v39" stroke="#0f0" strokeWidth="4" />
    <path d="M51 395l3-11h2l3 11z" fill="#0f0" />
    <path d="M65 387l4.500 4.500L74 387M69.500 391v6" fill="none" stroke="#0f0" />
    <path d="M57 433h36" stroke="#f00" strokeWidth="4" />
    <path d="M92 429l12 3v2l-12 3z" fill="#f00" />
    <path d="M92 412l9 9M101 412l-9 9" stroke="#f00" strokeWidth="1.300" fill="none" />
    <circle cx="57.500" cy="470" r="12.500" fill="none" stroke="#0a8a0a" strokeDasharray="5 1" />
    <text x="46" y="475" fontFamily="Noto Sans" fontSize="16" fill="#eee">E-8</text>
  </Drawing>
);

export default function App() {
  return (
    <Window>
      <GlobalStyle />
      <TitleBar>
        <Svg width="16" height="16" viewBox="0 0 16 16" aria-hidden="true">
          <rect width="16" height="16" rx="3" fill="#1d83e0" />
          <path d="M9 3.500H6.500v9M3 7.500h9.500q.5 4-3.500 4" fill="none" stroke="#fff" strokeWidth="1.500" />
        </Svg>
        <AppTitle>广联达BIM钢筋算量软件 GGJ2013 - [C:\Users\Administrator\Desktop\中航花园二期.GGJ12]</AppTitle>
        <Caption>
          <CaptionButton aria-label="最小化">
            <Svg width="12" height="4"><rect x=".5" y=".5" width="11" height="3" fill="#fff" stroke="#4a5c74" /></Svg>
          </CaptionButton>
          <CaptionButton aria-label="还原">
            <Svg width="12" height="12"><path d="M4 1h7v7H8M1 4h7v7H1zM4 6.500h1.500v2H4z" fill="none" stroke="#fff" strokeWidth="1.600" /></Svg>
          </CaptionButton>
          <CaptionButton $danger aria-label="关闭窗口">
            <Svg width="12" height="10"><path d="M2 1l8 8M10 1L2 9" stroke="#5c1c14" strokeWidth="4" /><path d="M2 1l8 8M10 1L2 9" stroke="#fff" strokeWidth="2.400" /></Svg>
          </CaptionButton>
        </Caption>
      </TitleBar>

      <MenuBar>
        <MenuList>
          {menus.map((m) => <MenuItem key={m}>{m}</MenuItem>)}
          <Tool icon="newChange" label="新建变更" />
          <Drop />
          <Tool icon="mascot" label="广小二" />
        </MenuList>
        <MenuPanel>Access violation at ..</MenuPanel>
        <MenuPanel $grow>
          <ToolButton><ToolLabel>2449897057@qq.com</ToolLabel></ToolButton>
          <Drop />
          <More />
        </MenuPanel>
      </MenuBar>

      <ToolRow>
        <ToolGroup $width={151}>
          <Tool icon="page" />
          <Tool icon="openFile" />
          <Drop />
          <Tool icon="save" />
          <Separator />
          <Tool icon="undo" />
          <Drop />
          <More />
        </ToolGroup>
        <ToolGroup $width={548}>
          <Tool icon="eye" label="隐藏" />
          <Tool icon="define" label="定义" off />
          <Tool icon="sigma" label="汇总计算" />
          <Tool icon="cloud" label="云检查" />
          <Tool icon="flush" label="平齐板顶" off />
          <Tool icon="binoculars" label="查找图元" />
          <Tool icon="glasses" label="查看钢筋量" />
          <More />
        </ToolGroup>
        <ToolGroup>
          <Combo icon="flat2d" label="视图维度" value="二维" width={61} />
          <Tool icon="cube" label="俯视" />
          <Drop />
          <Tool icon="orbit" label="动态观察" />
          <Tool icon="part3d" label="局部三维" />
          <Separator />
          <Tool icon="full" label="全屏" />
          <Tool icon="zoom" label="缩放" />
          <Drop />
          <Tool icon="pan" label="平移" on />
          <Drop />
          <Tool icon="screenRotate" label="屏幕旋转" drop />
          <Separator />
          <Tool icon="floors" label="选择楼层" />
          <More />
        </ToolGroup>
      </ToolRow>

      <Workspace>
        <Column>
          <Panel title="模块导航栏" active />
          <NavButton>工程设置</NavButton>
          <NavButton>绘图输入</NavButton>
          <NavTools>
            <Svg width="40" height="16" viewBox="0 0 40 16" aria-hidden="true">
              <path d="M4.500 1v9M0 5.500h9M11.500 7v9M7 11.500h9" stroke="#000" strokeWidth="3" />
              <path d="M4.500 2v7M1 5.500h7M11.500 8v7M8 11.500h7" stroke="#0a9088" />
              <path d="M23 5.500h9M30 11.500h9" stroke="#000" strokeWidth="3" />
              <path d="M24 5.500h7M31 11.500h7" stroke="#0a9088" />
            </Svg>
          </NavTools>
          <TreeBox>
            <TreeList>
              <Leaves items={foundation} line />
              <FolderRow label="其它" />
              <FolderRow label="自定义" />
              <FolderRow label="CAD识别" open>
                <Svg width="18" height="14" viewBox="0 0 18 14" aria-hidden="true">
                  <path d="M3.500.5h13v13h-13zM10 1v12M5.500 3v8h2.500V3zM12 3v8h2.500V3zM5 6h3M12 6h3" fill="#cfe8fb" stroke="#2f86c8" />
                </Svg>
                <NewTag>NEW</NewTag>
              </FolderRow>
              <Leaves items={recognition} />
            </TreeList>
            <ScrollColumn>
              <ScrollArrow aria-label="向上滚动"><Svg width="7" height="4"><path d="M0 4h7L3.500 0z" fill="#444" /></Svg></ScrollArrow>
              <TrackBefore />
              <Thumb><Svg width="7" height="8"><path d="M0 1h7M0 4h7M0 7h7" stroke="#555" /></Svg></Thumb>
              <ScrollArrow aria-label="向下滚动"><Svg width="7" height="4"><path d="M0 0h7L3.500 4z" fill="#444" /></Svg></ScrollArrow>
            </ScrollColumn>
          </TreeBox>
          <NavButton>单构件输入</NavButton>
          <NavButton>报表预览</NavButton>
        </Column>

        <Column>
          <Panel title="图纸管理" />
          <TabRow>
            <Tab $on>图纸文件列表</Tab>
            <Tab>图纸楼层对照表</Tab>
            <TabArrow aria-label="上一页"><Svg width="4" height="6"><path d="M4 0v6L0 3z" fill="#2a5cb0" /></Svg></TabArrow>
            <TabArrow aria-label="下一页"><Svg width="4" height="6"><path d="M0 0v6l4-3z" fill="#2a5cb0" /></Svg></TabArrow>
          </TabRow>
          <Sheet>
            <SheetTools>
              <FlatButton>添加图纸</FlatButton>
              <FlatButton aria-label="添加方式"><Caret /></FlatButton>
              <FlatButton>整理图纸</FlatButton>
              <FlatButton $push aria-label="更多"><Chevrons /></FlatButton>
            </SheetTools>
            <Well>
              <Files>
                <colgroup><col width="19" /><col /></colgroup>
                <thead><tr><td /><th scope="col">图纸名称</th></tr></thead>
                <tbody><tr><th scope="row"><Dialog text="1" /></th><td><Dialog text="地下室结构图(当前图)" /></td></tr></tbody>
              </Files>
              <HScroll>
                <ScrollArrow aria-label="向左滚动"><Svg width="4" height="7"><path d="M4 0v7L0 3.500z" fill="#333" /></Svg></ScrollArrow>
                <HThumb />
                <ScrollArrow aria-label="向右滚动"><Svg width="4" height="7"><path d="M0 0v7l4-3.500z" fill="#333" /></Svg></ScrollArrow>
              </HScroll>
            </Well>
          </Sheet>
          <Svg width="1" height="7" aria-hidden="true" />
          <Panel title="CAD图层显示" />
          <LayerBox>
            {['已提取的CAD图层', 'CAD原始图层'].map((name, i) => (
              <LayerRow key={name}>
                <Svg width="11" height="9" aria-hidden="true">
                  <path d="M1.500 1.500v6l3-3z" fill="#fff" stroke="#b0b0b0" />
                  <path d="M8 4.500h1M10 4.500h1" stroke="#888" />
                </Svg>
                <LayerLabel>
                  <LayerCheck type="checkbox" defaultChecked={i === 0} />
                  <span><Dialog text={name} /></span>
                </LayerLabel>
              </LayerRow>
            ))}
          </LayerBox>
        </Column>

        <Column>
          <ToolStack>
            <ToolGroup>
              <Grip />
              <Tool icon="brush" label="删除" />
              <Separator />
              <Tool icon="copy" label="复制" />
              <Tool icon="mirror" label="镜像" />
              <Separator />
              <Tool icon="move" label="移动" />
              <Tool icon="rotate" label="旋转" />
              <Separator />
              <Tool icon="extend" label="延伸" />
              <Tool icon="trim" label="修剪" />
              <Separator />
              <Tool icon="breakLine" label="打断" />
              <Tool icon="merge" label="合并" />
              <Tool icon="split" label="分割" off />
              <More />
            </ToolGroup>
            <ToolRow>
              <ToolGroup $width={520}>
                <Grip />
                <Combo label="楼层" value="首层" width={58} />
                <Combo label="模块" value="CAD识别" width={70} />
                <Combo label="构件类型" value="识别桩承台" width={70} />
                <Combo label="构件" value="未标识承台800*800" width={70} />
                <Combo label="范围" value="整体" width={70} />
                <Separator />
                <Tool icon="property" label="属性" on />
                <Tool icon="pencil" label="编辑钢筋" />
                <More />
              </ToolGroup>
              <ToolGroup $width={70}>
                <Grip />
                <Tool icon="twoPoint" label="两点" />
                <More />
              </ToolGroup>
              <ToolGroup>
                <Grip />
              </ToolGroup>
            </ToolRow>
            <ToolRow>
              <ToolGroup $width={180}>
                <Grip />
                <Tool icon="cursor" label="选择" />
                <Drop />
                <Separator />
                <Tool icon="point" label="点" />
                <Tool icon="rotatePoint" label="旋转点" />
              </ToolGroup>
              <ToolGroup>
                <Grip />
                <Tool icon="locate" label="定位CAD图" />
                <Tool icon="clearCad" label="清除CAD图" />
                <Tool icon="scale" label="设置比例" />
                <Tool icon="batch" label="批量替换" />
                <More />
              </ToolGroup>
            </ToolRow>
            <ToolRow>
              <ToolGroup $width={425}>
                <Grip />
                <Tool icon="extractEdge" label="提取桩承台边线" />
                <Tool icon="extractMark" label="提取桩承台标识" />
                <Tool icon="identifyCap" label="识别桩承台" drop />
                <Tool icon="checkCap" label="承台图元校核" />
              </ToolGroup>
              <ToolGroup>
                <Grip />
                <Tool icon="layers" label="图层设置" on />
                <More />
              </ToolGroup>
            </ToolRow>
          </ToolStack>
          <CadDrawing />
          <BottomTools>
            <ToolGroup $width={210}>
              <Grip />
              <Tool icon="ortho" label="正交" />
              <Tool icon="snap" label="对象捕捉" on />
              <Tool icon="dynamic" label="动态输入" on />
            </ToolGroup>
            <ToolGroup $width={262}>
              <Grip />
              <Tool icon="cross" label="交点" />
              <Tool icon="perp" label="垂点" on />
              <Tool icon="middle" label="中点" on />
              <Tool icon="vertex" label="顶点" />
              <Tool icon="coord" label="坐标" />
            </ToolGroup>
            <ToolGroup>
              <Grip />
              <Combo label="偏移方式" value="不偏移" width={59} />
              <Separator />
              <ToolLabel>X=</ToolLabel>
              <More />
            </ToolGroup>
          </BottomTools>
        </Column>

        <Column>
          <Panel title="属性编辑器" />
          <PropertyBox>
            <PropertyTable>
              <colgroup><col /><col /><col /></colgroup>
              <thead>
                <tr>
                  <th scope="col" />
                  <NameHead scope="col">属性名称</NameHead>
                  <ValueHead scope="col">属性值</ValueHead>
                </tr>
              </thead>
              <tbody>
                {properties.map(([name, value, state], i) => (
                  <PropertyRow key={name} $state={state}>
                    <th scope="row"><Dialog text={String(i + 1)} /></th>
                    <td>
                      {state === 'group' && <Expander aria-label="展开显示样式">+</Expander>}
                      <Dialog text={name} />
                    </td>
                    <td><Dialog text={value} /></td>
                  </PropertyRow>
                ))}
              </tbody>
            </PropertyTable>
          </PropertyBox>
          <Highlight />
        </Column>
      </Workspace>

      <StatusBar>
        <StatusCell $width={148}><Dialog text="X=125761 Y=34901" /></StatusCell>
        <StatusCell $width={78}><Dialog text="层高:3m" /></StatusCell>
        <StatusCell $width={98}><Dialog text="底标高:-1.75m" /></StatusCell>
        <StatusCell $width={48}><Dialog text="1(11)" /></StatusCell>
        <StatusCell><Dialog text="按鼠标左键并拖动进行平移，按右键结束或ESC取消" /></StatusCell>
        <StatusCell $width={70}><Dialog text="127.7 FPS" /></StatusCell>
      </StatusBar>

      <TaskBar>
        <Svg width="190" height="8" viewBox="0 0 190 8" aria-hidden="true">
          <path d="M12 8q16-12 32 0z" fill="#8fb0cc" stroke="#dbe9f4" />
          <path d="M78 8q8-6 18-3l6 3z" fill="#e8f4e0" />
          <path d="M90 5q8-6 12 3" fill="none" stroke="#5cb83c" strokeWidth="2" />
          <path d="M122.500 8V.5h57V8z" fill="#c3daf0" stroke="#eef6fd" />
          <path d="M136 8q2-5 8-5h16q6 0 8 5z" fill="#1590f0" />
        </Svg>
        <Clock>9:04</Clock>
      </TaskBar>
      <FloatBall aria-label="加速">44</FloatBall>
    </Window>
  );
}
